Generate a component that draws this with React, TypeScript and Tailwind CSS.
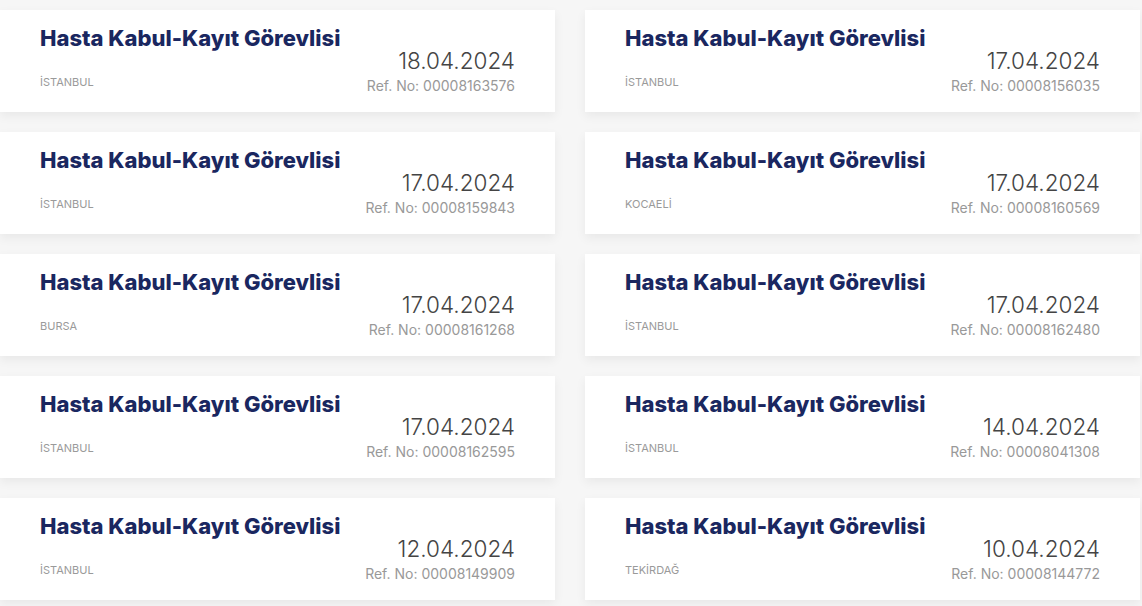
import React from "react";

const jobs = [
  { loc: "İSTANBUL", date: "18.04.2024", ref: "00008163576" },
  { loc: "İSTANBUL", date: "17.04.2024", ref: "00008156035" },
  { loc: "İSTANBUL", date: "17.04.2024", ref: "00008159843" },
  { loc: "KOCAELİ", date: "17.04.2024", ref: "00008160569" },
  { loc: "BURSA", date: "17.04.2024", ref: "00008161268" },
  { loc: "İSTANBUL", date: "17.04.2024", ref: "00008162480" },
  { loc: "İSTANBUL", date: "17.04.2024", ref: "00008162595" },
  { loc: "İSTANBUL", date: "14.04.2024", ref: "00008041308" },
  { loc: "İSTANBUL", date: "12.04.2024", ref: "00008149909" },
  { loc: "TEKİRDAĞ", date: "10.04.2024", ref: "00008144772" },
];

export default function App() {
  return (
    <div className="min-h-[606px] w-[1142px] bg-[#f6f6f6] pt-[10px] font-['Inter',sans-serif]">
      <div className="grid w-[1140px] grid-cols-2 gap-x-[30px] gap-y-[20px]">
        {jobs.map((j, i) => (
          <div
            key={i}
            className="flex h-[102px] justify-between bg-white pl-10 pr-10 shadow-[0_4px_10px_rgba(0,0,0,0.06)]"
          >
            <div className="flex flex-col pt-[13px]">
              <div className="text-[22px] font-extrabold leading-[30px] tracking-[0px] text-[#1a2760]">
                Hasta Kabul-Kayıt Görevlisi
              </div>
              <div className="mt-[22px] text-[11px] leading-[14px] text-[#9a9a9a]">{j.loc}</div>
            </div>
            <div className="flex flex-col items-end pt-[38px]">
              <div className="text-[22.5px] font-light leading-[26px] text-[#444]">{j.date}</div>
              <div className="mt-[3px] text-[14px] leading-[18px] text-[#999]">Ref. No: {j.ref}</div>
            </div>
          </div>
        ))}
      </div>
    </div>
  );
}
